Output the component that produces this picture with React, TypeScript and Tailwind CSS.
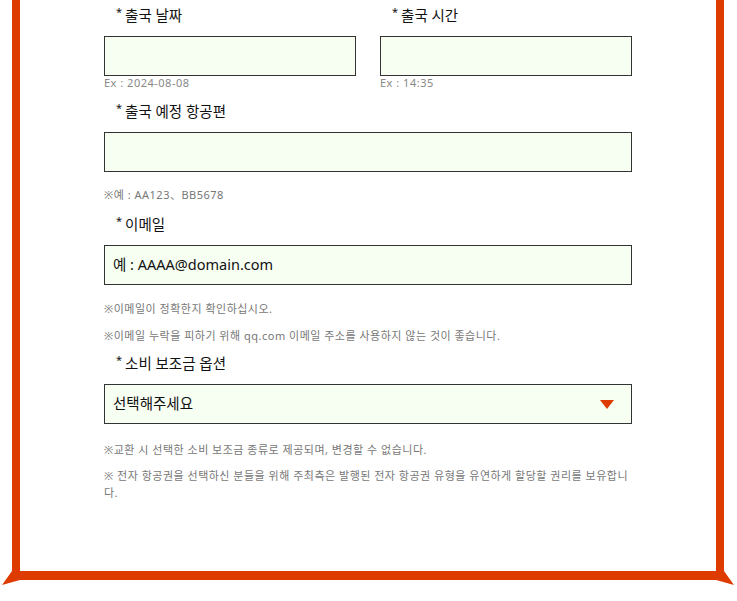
import React from 'react'

const font = { fontFamily: '"Noto Sans", "Noto Sans CJK KR", sans-serif' }

function Label({ text }: { text: string }) {
  return (
    <div className="pl-3 flex items-start text-[14.5px] leading-[22px] text-[#111]">
      <span className="text-[11px] leading-[16px] mr-[3px]">*</span>
      <span>{text}</span>
    </div>
  )
}

function Field({ value }: { value?: string }) {
  return (
    <div className="mt-[10px] h-10 border border-[#333] bg-[#f7fff2] flex items-center px-2 text-[14.5px] text-[#111]">
      {value}
    </div>
  )
}

function Hint({ children, className = '' }: { children: React.ReactNode; className?: string }) {
  return <p className={`text-[11px] leading-[17px] tracking-[0.5px] text-[#777] ${className}`}>{children}</p>
}

export default function App() {
  return (
    <div className="relative w-full bg-white pl-3 pr-[13px] pb-5" style={font}>
      <div className="border-l-8 border-r-8 border-b-[9px] border-[#dd3b00] px-[84px] pt-1 pb-[70px]">
        {/* 날짜 / 시간 */}
        <div className="grid grid-cols-2 gap-6">
          <div>
            <Label text="출국 날짜" />
            <Field />
            <p className="text-[11px] leading-[14px] tracking-[0.5px] text-[#888]">Ex : 2024-08-08</p>
          </div>
          <div>
            <Label text="출국 시간" />
            <Field />
            <p className="text-[11px] leading-[14px] tracking-[0.5px] text-[#888]">Ex : 14:35</p>
          </div>
        </div>

        {/* 항공편 */}
        <div className="mt-[10px]">
          <Label text="출국 예정 항공편" />
          <Field />
          <Hint className="mt-[14px]">※예 : AA123、BB5678</Hint>
        </div>

        {/* 이메일 */}
        <div className="mt-[10px]">
          <Label text="이메일" />
          <Field value="예 : AAAA@domain.com" />
          <Hint className="mt-[15px]">※이메일이 정확한지 확인하십시오.</Hint>
          <Hint className="mt-[10px]">※이메일 누락을 피하기 위해 qq.com 이메일 주소를 사용하지 않는 것이 좋습니다.</Hint>
        </div>

        {/* 소비 보조금 */}
        <div className="mt-[8px]">
          <Label text="소비 보조금 옵션" />
          <div className="mt-[10px] h-10 border border-[#333] bg-[#f7fff2] flex items-center justify-between pl-2 pr-[17px] text-[14.5px] text-[#111]">
            <span>선택해주세요</span>
            <svg width="14" height="9" viewBox="0 0 14 9">
              <polygon points="0,0 14,0 7,9" fill="#dd3b00" />
            </svg>
          </div>
          <Hint className="mt-[17px]">※교환 시 선택한 소비 보조금 종류로 제공되며, 변경할 수 없습니다.</Hint>
          <Hint className="mt-[9px]">※ 전자 항공권을 선택하신 분들을 위해 주최측은 발행된 전자 항공권 유형을 유연하게 할당할 권리를 보유합니다.</Hint>
        </div>
      </div>

      <svg className="absolute left-0 bottom-[15px]" width="22" height="18" viewBox="0 0 22 18">
        <polygon points="12,0 20,0 20,13 2,18 12,4" fill="#dd3b00" />
      </svg>
      <svg className="absolute right-0 bottom-[15px]" width="22" height="18" viewBox="0 0 22 18">
        <polygon points="9,0 1,0 1,13 19,18 9,4" fill="#dd3b00" />
      </svg>
    </div>
  )
}
